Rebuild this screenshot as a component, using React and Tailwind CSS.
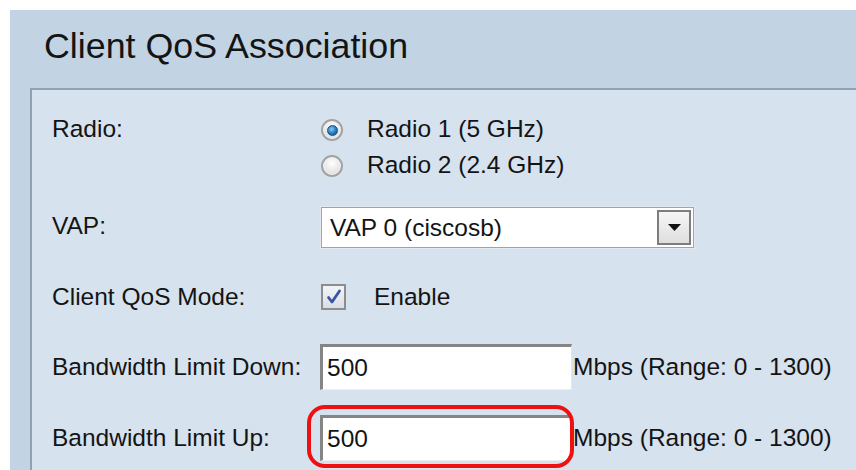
import React from "react";

function RadioDot({ checked }) {
  return (
    <span className="flex h-[22px] w-[22px] shrink-0 items-center justify-center rounded-full border-2 border-[#a3a3a3] bg-[radial-gradient(circle_at_50%_35%,#ffffff,#d4d4d4)] shadow-[inset_0_0_0_1px_#f4f4f4]">
      {checked && (
        <span className="h-[11px] w-[11px] rounded-full border border-[#0d4f86] bg-[radial-gradient(circle_at_40%_35%,#86c9f2,#1a73b8_60%,#0b4a80)]" />
      )}
    </span>
  );
}

function Row({ label, children, className = "" }) {
  return (
    <div className={"flex items-center " + className}>
      <div className="w-[268px] shrink-0 leading-[28px]">{label}</div>
      {children}
    </div>
  );
}

function TextBox({ value }) {
  return (
    <div className="flex h-[46px] w-[252px] items-center border-t-[3px] border-l-[3px] border-r border-b border-t-[#858585] border-l-[#858585] border-r-[#e6e6e6] border-b-[#eeeeee] bg-white pl-[4px] leading-[28px]">
      {value}
    </div>
  );
}

export default function App() {
  return (
    <div className="h-[470px] w-[856px] overflow-hidden bg-white pl-[10px] pt-[10px] font-['Liberation_Sans',Arial,sans-serif] text-[24.5px] text-[#141414]">
      <div className="flex h-full flex-col bg-[#c2d4e4]">
        <div className="h-[78px] shrink-0 pl-[34px] pt-[16px] text-[35.8px] leading-[40px]">
          Client QoS Association
        </div>
        <div className="ml-[20px] flex-1 border-l-2 border-t-2 border-[#8fa1b2] bg-[#d6e2ee] pl-[20px] pt-[25px]">
          {/* Radio selection */}
          <div className="flex items-start">
            <div className="w-[268px] shrink-0 leading-[28px]">Radio:</div>
            <div className="flex flex-col gap-[8px]">
              <label className="ml-[1px] flex h-[28px] items-center gap-[24px] pt-[2px]">
                <RadioDot checked />
                <span className="-mt-[2px] leading-[28px]">Radio 1 (5 GHz)</span>
              </label>
              <label className="ml-[1px] flex h-[28px] items-center gap-[24px] pt-[2px]">
                <RadioDot />
                <span className="-mt-[2px] leading-[28px]">Radio 2 (2.4 GHz)</span>
              </label>
            </div>
          </div>

          {/* VAP dropdown */}
          <div className="mt-[28px] flex items-start">
            <div className="mt-[5px] w-[268px] shrink-0 leading-[28px]">VAP:</div>
            <div className="ml-[1px] flex h-[41px] w-[373px] items-center border border-[#a3a3a3] bg-white p-[2px] shadow-[0_0_0_1px_#e2e9f0]">
              <span className="flex-1 pl-[6px] leading-[28px]">VAP 0 (ciscosb)</span>
              <span className="flex h-[35px] w-[34px] items-center justify-center border-2 border-[#7d7d7d] bg-[linear-gradient(#f6f6f6,#dedede)]">
                <svg width="13" height="7" viewBox="0 0 13 7">
                  <path d="M0 0 L13 0 L6.5 7 Z" fill="#111" />
                </svg>
              </span>
            </div>
          </div>

          {/* QoS mode */}
          <Row label="Client QoS Mode:" className="mt-[35px] h-[28px]">
            <div className="ml-[1px] flex items-center gap-[28px]">
              <span className="flex h-[26px] w-[25px] items-center justify-center border-2 border-[#8d8d8d] bg-[linear-gradient(#f2f4f7,#d9dee6)]">
                <svg width="16" height="16" viewBox="0 0 16 16">
                  <path d="M2.5 8.5 L6 13 L13.5 2" fill="none" stroke="#3a54a2" strokeWidth="2.8" strokeLinecap="round" strokeLinejoin="round" />
                </svg>
              </span>
              <span className="leading-[28px]">Enable</span>
            </div>
          </Row>

          {/* Bandwidth limits */}
          <Row label="Bandwidth Limit Down:" className="mt-[33px]">
            <TextBox value="500" />
            <span className="ml-[1px] leading-[28px]">Mbps (Range: 0 - 1300)</span>
          </Row>

          <Row label="Bandwidth Limit Up:" className="mt-[25px]">
            <div className="relative">
              <TextBox value="500" />
              <span className="pointer-events-none absolute left-[-13px] top-[-10px] h-[63px] w-[267px] rounded-[18px] border-[4px] border-[#ee1111]" />
            </div>
            <span className="ml-[1px] leading-[28px]">Mbps (Range: 0 - 1300)</span>
          </Row>
        </div>
      </div>
    </div>
  );
}
